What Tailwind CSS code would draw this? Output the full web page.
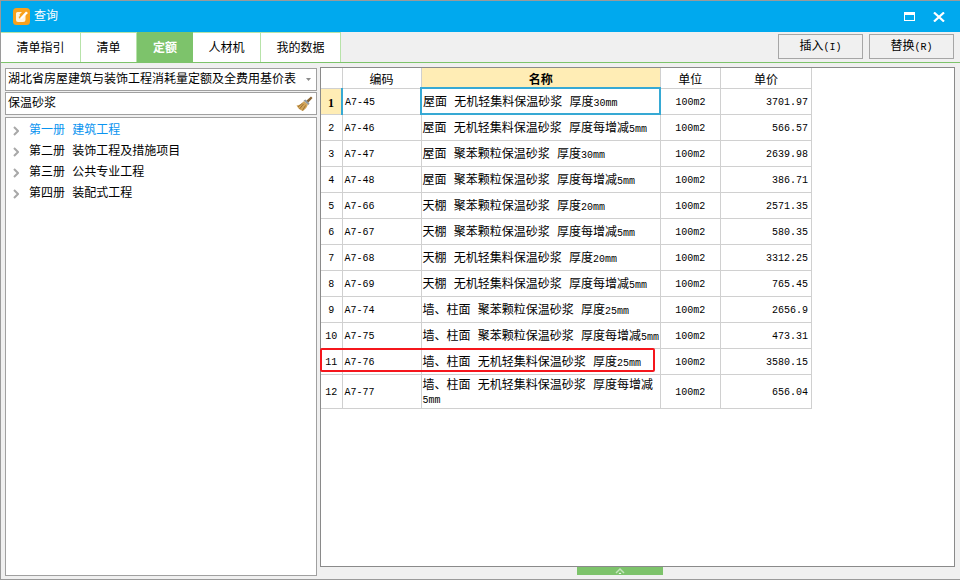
<!DOCTYPE html>
<html lang="zh">
<head>
    <meta charset="UTF-8">
    <title>查询</title>
    <script src="https://cdn.jsdelivr.net/npm/@tailwindcss/browser@4"></script>
</head>
<body class="bg-white">
    <div class="w-[960px] h-[580px] flex flex-col bg-[#f0f0f0] border-l border-t border-b border-[#9a9a9a] text-xs text-black overflow-hidden font-['Liberation_Mono','Noto_Sans_CJK_SC',monospace]">
        <!-- title bar -->
        <div class="h-[31px] shrink-0 bg-[#00a9ee] flex items-center pl-[12px] pr-[15px] text-white">
            <svg width="17" height="17" viewBox="0 0 17 17">
                <rect width="17" height="17" rx="3.5" fill="#f9a11b"/>
                <path d="M3 5.5 Q3 4 4.5 4 H9 L6.5 6.5 L7 8 L5.5 9 L7 11 L12.5 6 V11.5 Q12.5 14 10 14 H5 Q3 14 3 12 Z" fill="#fff3dc"/>
                <path d="M7.5 9.5 L13 3.5 L15 5 L9 10.8 L7 11.2 Z" fill="#fff"/>
            </svg>
            <span class="ml-[4px]">查询</span>
            <svg class="ml-auto" width="12" height="10" viewBox="0 0 12 10"><rect x="0.5" y="0.5" width="10" height="8" fill="none" stroke="#fff"/><rect x="0" y="0" width="11" height="3" fill="#fff"/></svg>
            <svg class="ml-[17px]" width="12" height="10" viewBox="0 0 12 10"><path d="M1 0.5 L11 9.5 M11 0.5 L1 9.5" stroke="#fff" stroke-width="2.2"/></svg>
        </div>

        <!-- tabs and actions -->
        <div class="h-[31px] shrink-0 flex border-b border-[#7dc36b]">
            <div class="w-[80px] pt-[3px] bg-white border-t border-r border-[#b7e3a9] flex items-center justify-center">清单指引</div>
            <div class="w-[56px] pt-[3px] bg-white border-t border-r border-[#b7e3a9] flex items-center justify-center">清单</div>
            <div class="w-[56px] pt-[3px] bg-[#7dc36b] text-white font-bold flex items-center justify-center">定额</div>
            <div class="w-[68px] pt-[3px] bg-white border-t border-r border-[#b7e3a9] flex items-center justify-center">人材机</div>
            <div class="w-[80px] pt-[3px] bg-white border-t border-r border-[#b7e3a9] flex items-center justify-center">我的数据</div>
            <div class="ml-auto mr-[6px] flex items-start gap-[6px] pt-[2px]">
                <button class="w-[85px] h-[25px] pt-[1px] border border-[#a6a6a6] bg-[#f0f0f0]">插入<span class="text-[10px]">(I)</span></button>
                <button class="w-[85px] h-[25px] pt-[1px] border border-[#a6a6a6] bg-[#f0f0f0]">替换<span class="text-[10px]">(R)</span></button>
            </div>
        </div>

        <!-- main area -->
        <div class="flex-1 min-h-0 flex pt-[4px] pl-[4px] pr-[4px]">
            <!-- left column -->
            <div class="w-[312px] shrink-0 flex flex-col pb-[3px] pt-[1px]">
                <div class="h-[23px] shrink-0 bg-white border border-[#a0a0a0] flex items-center pl-[2px] pr-[5px] whitespace-nowrap">
                    <span class="flex-1">湖北省房屋建筑与装饰工程消耗量定额及全费用基价表</span>
                    <svg width="5" height="3" viewBox="0 0 5 3"><path d="M0 0 H5 L2.5 3 Z" fill="#8a8a8a"/></svg>
                </div>
                <div class="h-[23px] shrink-0 mt-[1px] pt-[1px] bg-white border border-[#a0a0a0] flex items-center pl-[2px] pr-[3px]">
                    <span class="flex-1">保温砂浆</span>
                    <svg width="17" height="16" viewBox="0 0 17 16">
                        <path d="M0.5 9.5 Q5 9 8 5 L12 8.5 Q11 12 7 15 Q3 14 0.5 9.5 Z" fill="#d2a55a"/>
                        <path d="M3.5 13 L7.5 8 M6.5 14.5 L9.5 9.5 M2 11 L6.5 7" stroke="#8f6428" stroke-width="0.8"/>
                        <path d="M9.5 5.5 L15 0.5 L16.5 2 L11.5 7.5 Z" fill="#8a6534"/>
                        <path d="M7.5 4.5 L12.5 9 L13.5 7.5 L9.5 3.5 Z" fill="#8f9aa0"/>
                    </svg>
                </div>
                <div class="flex-1 mt-[2px] bg-white border border-[#a0a0a0] pt-[2px] pl-[7px]">
                    <div class="h-[21px] flex items-center gap-[10px] text-[#0a94f0]">
                        <svg width="6" height="10" viewBox="0 0 6 10"><path d="M1 1 L5 5 L1 9" fill="none" stroke="#a8a8a8" stroke-width="2"/></svg>
                        <span>第一册&nbsp;建筑工程</span>
                    </div>
                    <div class="h-[21px] flex items-center gap-[10px]">
                        <svg width="6" height="10" viewBox="0 0 6 10"><path d="M1 1 L5 5 L1 9" fill="none" stroke="#a8a8a8" stroke-width="2"/></svg>
                        <span>第二册&nbsp;装饰工程及措施项目</span>
                    </div>
                    <div class="h-[21px] flex items-center gap-[10px]">
                        <svg width="6" height="10" viewBox="0 0 6 10"><path d="M1 1 L5 5 L1 9" fill="none" stroke="#a8a8a8" stroke-width="2"/></svg>
                        <span>第三册&nbsp;公共专业工程</span>
                    </div>
                    <div class="h-[21px] flex items-center gap-[10px]">
                        <svg width="6" height="10" viewBox="0 0 6 10"><path d="M1 1 L5 5 L1 9" fill="none" stroke="#a8a8a8" stroke-width="2"/></svg>
                        <span>第四册&nbsp;装配式工程</span>
                    </div>
                </div>
            </div>

            <!-- right column -->
            <div class="ml-[3px] w-[635px] shrink-0 flex flex-col">
                <div class="h-[500px] shrink-0 bg-white border border-[#8a8a8a] relative">
                    <table class="table-fixed border-collapse w-[491px] text-center">
                        <colgroup>
                            <col class="w-[21px]"><col class="w-[79px]"><col class="w-[239px]"><col class="w-[60px]"><col class="w-[91px]">
                        </colgroup>
                        <thead class="leading-[12px]">
                            <tr class="h-[20px]">
                                <th class="pt-[6px] border-r border-b border-[#d0d0d0] font-normal"></th>
                                <th class="pt-[6px] border-r border-b border-[#d0d0d0] font-normal">编码</th>
                                <th class="pt-[6px] border-r border-b border-[#d0d0d0] bg-[#ffedb5] font-bold">名称</th>
                                <th class="pt-[6px] border-r border-b border-[#d0d0d0] font-normal">单位</th>
                                <th class="pt-[6px] border-r border-b border-[#d0d0d0] font-normal">单价</th>
                            </tr>
                        </thead>
                        <tbody class="text-[10px] [&_td]:pt-[4px]">
                            <tr class="h-[26px]">
                                <td class="border-r-2 border-b border-r-[#36a9d4] border-b-[#d0d0d0] bg-[#ffedb5] font-bold text-xs font-['Liberation_Serif']">1</td>
                                <td class="border-r border-b border-[#d0d0d0] text-left pl-[2px]">A7-45</td>
                                <td class="border-2 border-[#36a9d4] text-left pl-[1px] text-xs">屋面&nbsp;无机轻集料保温砂浆&nbsp;厚度<span class="text-[10px]">30mm</span></td>
                                <td class="border-r border-b border-[#d0d0d0]">100m2</td>
                                <td class="border-r border-b border-[#d0d0d0] text-right pr-[3px]">3701.97</td>
                            </tr>
                            <tr class="h-[26px]">
                                <td class="border-r border-b border-[#d0d0d0]">2</td>
                                <td class="border-r border-b border-[#d0d0d0] text-left pl-[2px]">A7-46</td>
                                <td class="border-r border-b border-[#d0d0d0] text-left pl-[1px] text-xs">屋面&nbsp;无机轻集料保温砂浆&nbsp;厚度每增减<span class="text-[10px]">5mm</span></td>
                                <td class="border-r border-b border-[#d0d0d0]">100m2</td>
                                <td class="border-r border-b border-[#d0d0d0] text-right pr-[3px]">566.57</td>
                            </tr>
                            <tr class="h-[26px]">
                                <td class="border-r border-b border-[#d0d0d0]">3</td>
                                <td class="border-r border-b border-[#d0d0d0] text-left pl-[2px]">A7-47</td>
                                <td class="border-r border-b border-[#d0d0d0] text-left pl-[1px] text-xs">屋面&nbsp;聚苯颗粒保温砂浆&nbsp;厚度<span class="text-[10px]">30mm</span></td>
                                <td class="border-r border-b border-[#d0d0d0]">100m2</td>
                                <td class="border-r border-b border-[#d0d0d0] text-right pr-[3px]">2639.98</td>
                            </tr>
                            <tr class="h-[26px]">
                                <td class="border-r border-b border-[#d0d0d0]">4</td>
                                <td class="border-r border-b border-[#d0d0d0] text-left pl-[2px]">A7-48</td>
                                <td class="border-r border-b border-[#d0d0d0] text-left pl-[1px] text-xs">屋面&nbsp;聚苯颗粒保温砂浆&nbsp;厚度每增减<span class="text-[10px]">5mm</span></td>
                                <td class="border-r border-b border-[#d0d0d0]">100m2</td>
                                <td class="border-r border-b border-[#d0d0d0] text-right pr-[3px]">386.71</td>
                            </tr>
                            <tr class="h-[26px]">
                                <td class="border-r border-b border-[#d0d0d0]">5</td>
                                <td class="border-r border-b border-[#d0d0d0] text-left pl-[2px]">A7-66</td>
                                <td class="border-r border-b border-[#d0d0d0] text-left pl-[1px] text-xs">天棚&nbsp;聚苯颗粒保温砂浆&nbsp;厚度<span class="text-[10px]">20mm</span></td>
                                <td class="border-r border-b border-[#d0d0d0]">100m2</td>
                                <td class="border-r border-b border-[#d0d0d0] text-right pr-[3px]">2571.35</td>
                            </tr>
                            <tr class="h-[26px]">
                                <td class="border-r border-b border-[#d0d0d0]">6</td>
                                <td class="border-r border-b border-[#d0d0d0] text-left pl-[2px]">A7-67</td>
                                <td class="border-r border-b border-[#d0d0d0] text-left pl-[1px] text-xs">天棚&nbsp;聚苯颗粒保温砂浆&nbsp;厚度每增减<span class="text-[10px]">5mm</span></td>
                                <td class="border-r border-b border-[#d0d0d0]">100m2</td>
                                <td class="border-r border-b border-[#d0d0d0] text-right pr-[3px]">580.35</td>
                            </tr>
                            <tr class="h-[26px]">
                                <td class="border-r border-b border-[#d0d0d0]">7</td>
                                <td class="border-r border-b border-[#d0d0d0] text-left pl-[2px]">A7-68</td>
                                <td class="border-r border-b border-[#d0d0d0] text-left pl-[1px] text-xs">天棚&nbsp;无机轻集料保温砂浆&nbsp;厚度<span class="text-[10px]">20mm</span></td>
                                <td class="border-r border-b border-[#d0d0d0]">100m2</td>
                                <td class="border-r border-b border-[#d0d0d0] text-right pr-[3px]">3312.25</td>
                            </tr>
                            <tr class="h-[26px]">
                                <td class="border-r border-b border-[#d0d0d0]">8</td>
                                <td class="border-r border-b border-[#d0d0d0] text-left pl-[2px]">A7-69</td>
                                <td class="border-r border-b border-[#d0d0d0] text-left pl-[1px] text-xs">天棚&nbsp;无机轻集料保温砂浆&nbsp;厚度每增减<span class="text-[10px]">5mm</span></td>
                                <td class="border-r border-b border-[#d0d0d0]">100m2</td>
                                <td class="border-r border-b border-[#d0d0d0] text-right pr-[3px]">765.45</td>
                            </tr>
                            <tr class="h-[26px]">
                                <td class="border-r border-b border-[#d0d0d0]">9</td>
                                <td class="border-r border-b border-[#d0d0d0] text-left pl-[2px]">A7-74</td>
                                <td class="border-r border-b border-[#d0d0d0] text-left pl-[1px] text-xs">墙、柱面&nbsp;聚苯颗粒保温砂浆&nbsp;厚度<span class="text-[10px]">25mm</span></td>
                                <td class="border-r border-b border-[#d0d0d0]">100m2</td>
                                <td class="border-r border-b border-[#d0d0d0] text-right pr-[3px]">2656.9</td>
                            </tr>
                            <tr class="h-[26px]">
                                <td class="border-r border-b border-[#d0d0d0]">10</td>
                                <td class="border-r border-b border-[#d0d0d0] text-left pl-[2px]">A7-75</td>
                                <td class="border-r border-b border-[#d0d0d0] text-left pl-[1px] text-xs whitespace-nowrap">墙、柱面&nbsp;聚苯颗粒保温砂浆&nbsp;厚度每增减<span class="text-[10px]">5mm</span></td>
                                <td class="border-r border-b border-[#d0d0d0]">100m2</td>
                                <td class="border-r border-b border-[#d0d0d0] text-right pr-[3px]">473.31</td>
                            </tr>
                            <tr class="h-[26px]">
                                <td class="border-r border-b border-[#d0d0d0]">11</td>
                                <td class="border-r border-b border-[#d0d0d0] text-left pl-[2px]">A7-76</td>
                                <td class="border-r border-b border-[#d0d0d0] text-left pl-[1px] text-xs">墙、柱面&nbsp;无机轻集料保温砂浆&nbsp;厚度<span class="text-[10px]">25mm</span></td>
                                <td class="border-r border-b border-[#d0d0d0]">100m2</td>
                                <td class="border-r border-b border-[#d0d0d0] text-right pr-[3px]">3580.15</td>
                            </tr>
                            <tr class="h-[33px]">
                                <td class="border-r border-b border-[#d0d0d0]">12</td>
                                <td class="border-r border-b border-[#d0d0d0] text-left pl-[2px]">A7-77</td>
                                <td class="border-r border-b border-[#d0d0d0] text-left pl-[1px] text-xs leading-[14px]">墙、柱面&nbsp;无机轻集料保温砂浆&nbsp;厚度每增减<br><span class="text-[10px]">5mm</span></td>
                                <td class="border-r border-b border-[#d0d0d0]">100m2</td>
                                <td class="border-r border-b border-[#d0d0d0] text-right pr-[3px]">656.04</td>
                            </tr>
                        </tbody>
                    </table>
                    <!-- red annotation round row 11 -->
                    <div class="absolute -left-[1px] top-[280px] w-[335px] h-[24px] border-2 border-[#f5161c] rounded-[2px]"></div>
                </div>
                <!-- collapse handle -->
                <div class="ml-[257px] w-[86px] h-[8px] bg-[#7dc36b] flex justify-center">
                    <svg width="10" height="7" viewBox="0 0 10 7"><path d="M1 6 L5 2 L9 6" fill="none" stroke="#c4e6bb" stroke-width="1.5"/><path d="M3.5 7 L5 5.5 L6.5 7 Z" fill="#fff"/></svg>
                </div>
            </div>
        </div>
    </div>
</body>
</html>
